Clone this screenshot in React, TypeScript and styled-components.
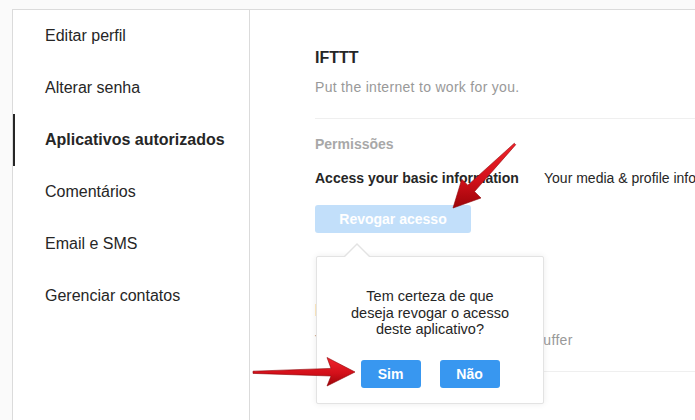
import React from 'react';
import styled, { createGlobalStyle } from 'styled-components';

const GlobalStyle = createGlobalStyle`
	html,
	body {
		margin: 0;
		padding: 0;
		background: #fafafa;
		font-family: 'Liberation Sans', Arial, sans-serif;
		color: #262626;
	}
`;

const menu = [
	'Editar perfil',
	'Alterar senha',
	'Aplicativos autorizados',
	'Comentários',
	'Email e SMS',
	'Gerenciar contatos',
];

const App: React.FC = () => {
	return (
		<>
			<GlobalStyle />
			<Page>
				<Panel>
					<Sidebar>
						{menu.map((item) => (
							<MenuItem key={item} active={item === 'Aplicativos autorizados'}>
								{item}
							</MenuItem>
						))}
					</Sidebar>
					<Content>
						<AppBlock>
							<AppName>IFTTT</AppName>
							<AppDescription>Put the internet to work for you.</AppDescription>
							<Divider />
							<SectionLabel>Permissões</SectionLabel>
							<PermissionRow>
								<PermissionName>Access your basic information</PermissionName>
								<PermissionDetail>Your media &amp; profile information</PermissionDetail>
							</PermissionRow>
							<RevokeWrap>
								<RevokeButton disabled>Revogar acesso</RevokeButton>
								<Popover>
									<PopoverText>
										Tem certeza de que
										<br />
										deseja revogar o acesso
										<br />
										deste aplicativo?
									</PopoverText>
									<PopoverActions>
										<ConfirmButton>Sim</ConfirmButton>
										<ConfirmButton>Não</ConfirmButton>
									</PopoverActions>
								</Popover>
							</RevokeWrap>
						</AppBlock>
						<AppBlock second>
							<AppName>Buffer</AppName>
							<AppDescription>The smartest way to share it with Buffer</AppDescription>
							<Divider />
						</AppBlock>
					</Content>
				</Panel>
				<Annotations width="695" height="420" viewBox="0 0 695 420">
					<defs>
						<linearGradient id="redArrow" x1="0" y1="0" x2="0" y2="1">
							<stop offset="0" stopColor="#f0242b" />
							<stop offset="0.55" stopColor="#d3101a" />
							<stop offset="1" stopColor="#9c0409" />
						</linearGradient>
					</defs>
					<polygon
						points="515.7,144.7 474.5,191.6 481,198 453,208 461.8,179.2 467.8,185.2 514.3,143.3"
						fill="url(#redArrow)"
						stroke="#8f0307"
						strokeWidth="0.6"
					/>
					<polygon
						points="253,371.2 331,368.4 327,357.5 355,372 327,386 331,376 253,373.4"
						fill="url(#redArrow)"
						stroke="#8f0307"
						strokeWidth="0.6"
					/>
				</Annotations>
			</Page>
		</>
	);
};

const Page = styled.div`
	position: relative;
	width: 695px;
	height: 420px;
	overflow: hidden;
	padding: 9px 0 0 12px;
	box-sizing: border-box;
`;

const Panel = styled.div`
	display: flex;
	width: 720px;
	height: 440px;
	background: #fff;
	border: 1px solid #dbdbdb;
	box-sizing: border-box;
`;

const Sidebar = styled.nav`
	display: flex;
	flex-direction: column;
	width: 237px;
	flex-shrink: 0;
	border-right: 1px solid #dbdbdb;
	box-sizing: border-box;
`;

const MenuItem = styled.div<{ active?: boolean }>`
	display: flex;
	align-items: center;
	height: 52px;
	padding-left: 30px;
	border-left: 2px solid ${({ active }) => (active ? '#262626' : 'transparent')};
	font-size: 16px;
	font-weight: ${({ active }) => (active ? 700 : 400)};
	color: #262626;
	white-space: nowrap;
`;

const Content = styled.main`
	flex: 1;
	padding-left: 65px;
	overflow: hidden;
`;

const AppBlock = styled.section<{ second?: boolean }>`
	padding-top: ${({ second }) => (second ? '68px' : '38px')};
`;

const AppName = styled.h2`
	margin: 0;
	font-size: 16px;
	line-height: 20px;
	font-weight: 700;
	color: #262626;
`;

const AppDescription = styled.p`
	margin: 10px 0 0;
	font-size: 14px;
	line-height: 18px;
	letter-spacing: 0.3px;
	color: #999;
	white-space: nowrap;
`;

const Divider = styled.hr`
	margin: 22px 0 0;
	border: none;
	border-top: 1px solid #efefef;
`;

const SectionLabel = styled.div`
	margin-top: 16px;
	font-size: 14px;
	line-height: 18px;
	font-weight: 700;
	color: #a8a8a8;
`;

const PermissionRow = styled.div`
	display: flex;
	margin-top: 16px;
	font-size: 14px;
	line-height: 18px;
	white-space: nowrap;
`;

const PermissionName = styled.span`
	width: 229px;
	flex-shrink: 0;
	font-weight: 700;
	color: #262626;
`;

const PermissionDetail = styled.span`
	color: #262626;
`;

const RevokeWrap = styled.div`
	position: relative;
	margin-top: 18px;
`;

const RevokeButton = styled.button`
	display: block;
	width: 156px;
	height: 28px;
	border: none;
	border-radius: 3px;
	background: #3897f0;
	opacity: 0.3;
	color: #fff;
	font-family: inherit;
	font-size: 14px;
	font-weight: 700;
	padding: 0;
`;

const Popover = styled.div`
	position: absolute;
	top: 51px;
	left: 1px;
	z-index: 2;
	width: 228px;
	height: 148px;
	box-sizing: border-box;
	padding-top: 31px;
	background: #fff;
	border: 1px solid #e3e3e3;
	border-radius: 2px;
	box-shadow: 0 0 6px rgba(0, 0, 0, 0.08);
	display: flex;
	flex-direction: column;
	align-items: center;

	&::before,
	&::after {
		content: '';
		position: absolute;
		left: 27px;
		width: 0;
		height: 0;
		border-left: 13px solid transparent;
		border-right: 13px solid transparent;
	}
	&::before {
		top: -14px;
		border-bottom: 13px solid #e3e3e3;
	}
	&::after {
		top: -12px;
		border-bottom: 13px solid #fff;
	}
`;

const PopoverText = styled.p`
	margin: 0;
	text-align: center;
	font-size: 14.5px;
	line-height: 16.5px;
	color: #262626;
`;

const PopoverActions = styled.div`
	display: flex;
	gap: 19px;
	margin-top: 22px;
`;

const ConfirmButton = styled.button`
	width: 60px;
	height: 28px;
	border: none;
	border-radius: 3px;
	background: #3897f0;
	color: #fff;
	font-family: inherit;
	font-size: 14px;
	font-weight: 700;
	padding: 0;
`;

const Annotations = styled.svg`
	position: absolute;
	left: 0;
	top: 0;
	pointer-events: none;
	z-index: 5;
`;

export default App;
